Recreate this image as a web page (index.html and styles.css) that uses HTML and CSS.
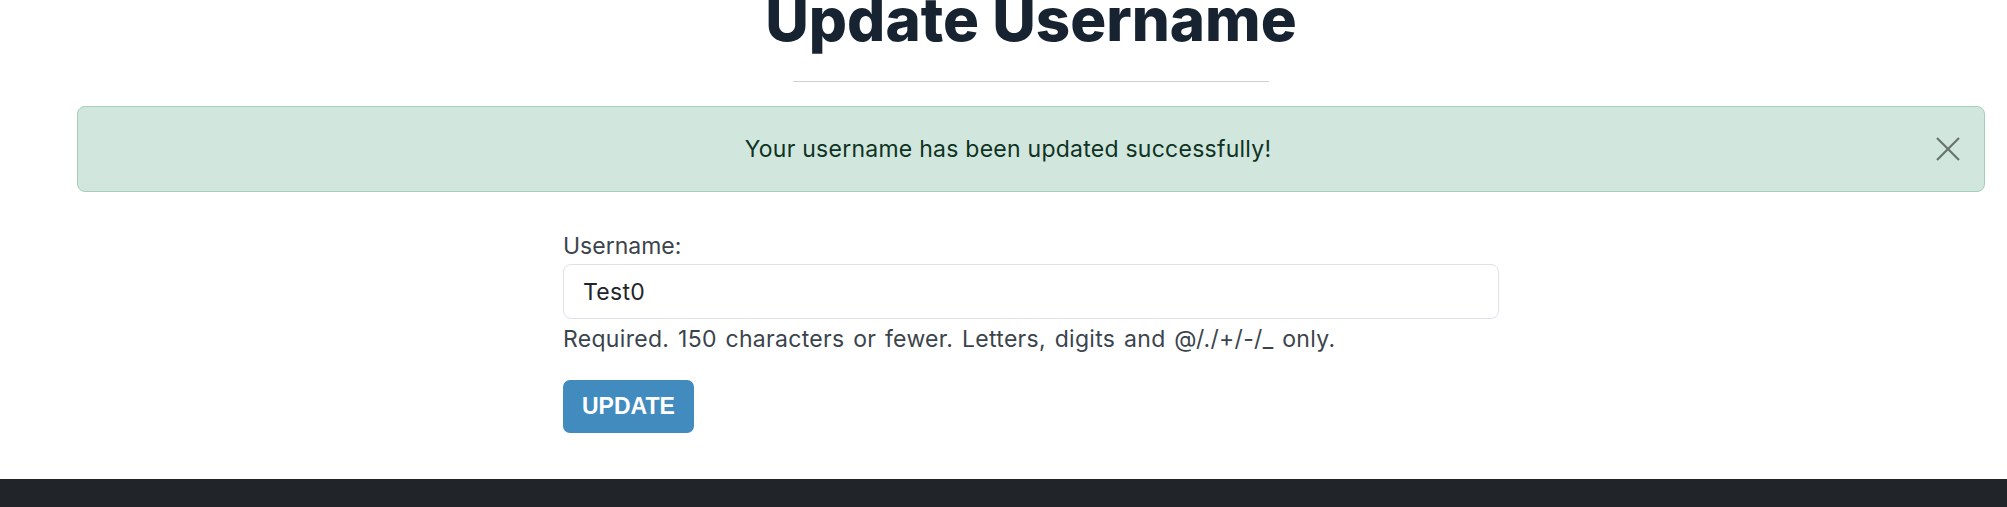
FILE: index.html
```html
<!DOCTYPE html>
<html lang="en">
<head>
<meta charset="utf-8">
<title>Update Username</title>
<link rel="stylesheet" href="styles.css">
</head>
<body>
<main class="page">
  <h1 class="title">Update Username</h1>
  <hr class="divider">
  <div class="alert" role="alert">
    <span class="alert-text">Your username has been updated successfully!</span>
    <button class="close" type="button" aria-label="Close">
      <svg width="24" height="24" viewBox="0 0 24 24"><path d="M1 1 L23 23 M23 1 L1 23" stroke="currentColor" stroke-width="2.2" fill="none"/></svg>
    </button>
  </div>
  <form class="form">
    <label class="label" for="username">Username:</label>
    <input class="input" id="username" type="text" value="Test0">
    <div class="help">Required. 150 characters or fewer. Letters, digits and @/./+/-/_ only.</div>
    <button class="btn" type="button">UPDATE</button>
  </form>
</main>
<footer class="footer"></footer>
</body>
</html>
```
FILE: styles.css
```css
html, body {
  margin: 0;
  padding: 0;
  background: #ffffff;
}
body {
  font-family: Inter, "Noto Sans", sans-serif;
  color: #212529;
  overflow: hidden;
}
.page {
  margin: 0 22px 0 77px;
  display: flex;
  flex-direction: column;
}
.title {
  margin: -17px 0 0;
  font-size: 60px;
  line-height: 72px;
  font-weight: 800;
  color: #172331;
  text-align: center;
  letter-spacing: 0;
}
.divider {
  width: 476px;
  margin: 26px auto 24px;
  border: 0;
  border-top: 1px solid #d0d0d0;
  height: 0;
}
.alert {
  position: relative;
  height: 84px;
  border: 1px solid #a3cfbb;
  border-radius: 8px;
  background: #d1e7dd;
  color: #0f3323;
  display: flex;
  align-items: center;
  justify-content: center;
  padding: 0 62px 0 16px;
  font-size: 23px;
  letter-spacing: 0.25px;
}
.close {
  position: absolute;
  right: 24px;
  top: 30px;
  width: 24px;
  height: 24px;
  padding: 0;
  border: 0;
  background: transparent;
  color: #69736e;
  display: flex;
}
.form {
  width: 936px;
  margin: 38px auto 46px;
  display: flex;
  flex-direction: column;
  align-items: flex-start;
}
.label {
  font-size: 23px;
  line-height: 32px;
  color: #3b444d;
  margin-bottom: 2px;
}
.input {
  box-sizing: border-box;
  width: 100%;
  height: 55px;
  border: 1px solid #dee2e6;
  border-radius: 8px;
  padding: 0 19px;
  font-family: Inter, "Noto Sans", sans-serif;
  font-size: 23px;
  letter-spacing: 0.3px;
  color: #212529;
  background: #fff;
  outline: none;
}
.help {
  margin-top: 4px;
  font-size: 23px;
  line-height: 32px;
  letter-spacing: 0.3px;
  word-spacing: 2px;
  color: #3b444d;
}
.btn {
  margin-top: 25px;
  height: 53px;
  padding: 0 19px;
  border: 0;
  border-radius: 7px;
  background: #428bbf;
  color: #ffffff;
  font-family: "Liberation Sans", Arial, sans-serif;
  font-weight: 700;
  font-size: 23px;
}
.footer {
  height: 60px;
  background: #212529;
}
```
